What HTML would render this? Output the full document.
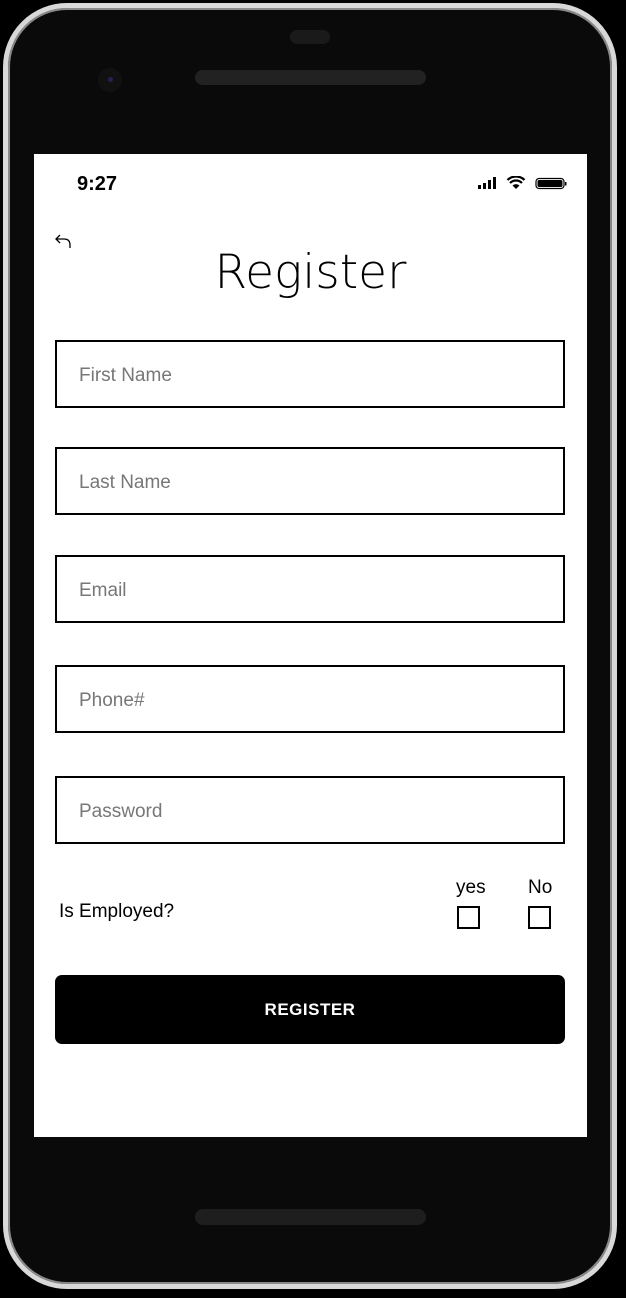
<!DOCTYPE html>
<html><head><style>
*{margin:0;padding:0;box-sizing:border-box}
body{width:626px;height:1298px;background:#000;position:relative;overflow:hidden;font-family:"Liberation Sans",sans-serif}
.body{position:absolute;left:3px;top:3px;width:614px;height:1286px;border-radius:64px;background:#0a0a0a;border:5px solid #d8d8d8;box-shadow:inset 0 0 0 2px #888}
.screen{position:absolute;left:34px;top:154px;width:553px;height:983px;background:#fff}
.abs{position:absolute}
.inp{position:absolute;left:21px;width:510px;height:68px;border:2.5px solid #000;font-size:19px;color:#777;padding-left:22px;line-height:67px}
.cb{position:absolute;width:23px;height:23px;border:2.5px solid #000}
</style></head><body>
<div class="body"></div>
<div class="abs" style="left:290px;top:30px;width:40px;height:14px;border-radius:7px;background:#1a1a1a"></div>
<div class="abs" style="left:195px;top:70px;width:231px;height:15px;border-radius:8px;background:#222"></div>
<div class="abs" style="left:98px;top:68px;width:24px;height:24px;border-radius:50%;background:#111"></div>
<div class="abs" style="left:108px;top:77px;width:5px;height:5px;border-radius:50%;background:#225"></div>
<div class="abs" style="left:195px;top:1209px;width:231px;height:16px;border-radius:8px;background:#1e1e1e"></div>
<div class="screen">
<div class="abs" style="left:43px;top:19px;font-size:20px;font-weight:bold;color:#000">9:27</div>
<svg class="abs" style="left:443px;top:22px" width="92" height="16" viewBox="0 0 92 16">
<rect x="1" y="9" width="3" height="4" fill="#000"/><rect x="6" y="7" width="3" height="6" fill="#000"/><rect x="11" y="4" width="3" height="9" fill="#000"/><rect x="16" y="1" width="3" height="12" fill="#000"/>
<path d="M39 13 L35.5 9.5 A5 5 0 0 1 42.5 9.5 Z" fill="#000"/><path d="M33 7 A8.5 8.5 0 0 1 45 7" stroke="#000" stroke-width="2.2" fill="none"/><path d="M30.5 4 A12 12 0 0 1 47.5 4" stroke="#000" stroke-width="2.2" fill="none"/>
<rect x="59" y="2.5" width="28" height="10" rx="3" fill="#fff" stroke="#000" stroke-width="1.2"/><rect x="60.5" y="4" width="25" height="7" rx="1.5" fill="#000"/><rect x="88" y="6" width="1.5" height="3.5" fill="#000"/>
</svg>
<svg class="abs" style="left:20px;top:78px" width="20" height="20" viewBox="0 0 20 20"><path d="M6 3 L2 7 L6 11 M2 7 H10 Q16 7 16 13 V16" stroke="#000" stroke-width="1.3" fill="none"/></svg>
<div class="abs" style="left:0;width:553px;top:91px;text-align:center;font-size:47px;color:#000;font-family:'DejaVu Sans',sans-serif;font-weight:200">Register</div>
<div class="inp" style="top:186px">First Name</div>
<div class="inp" style="top:293px">Last Name</div>
<div class="inp" style="top:401px">Email</div>
<div class="inp" style="top:511px">Phone#</div>
<div class="inp" style="top:622px">Password</div>
<div class="abs" style="left:25px;top:747px;font-size:19px;color:#000">Is Employed?</div>
<div class="abs" style="left:422px;top:723px;font-size:19px;color:#000">yes</div>
<div class="abs" style="left:494px;top:723px;font-size:19px;color:#000">No</div>
<div class="cb" style="left:423px;top:752px"></div>
<div class="cb" style="left:494px;top:752px"></div>
<div class="abs" style="left:21px;top:821px;width:510px;height:69px;background:#000;border-radius:7px;color:#fff;font-weight:bold;font-size:17px;text-align:center;line-height:69px;letter-spacing:0.5px">REGISTER</div>
</div>
</body></html>
